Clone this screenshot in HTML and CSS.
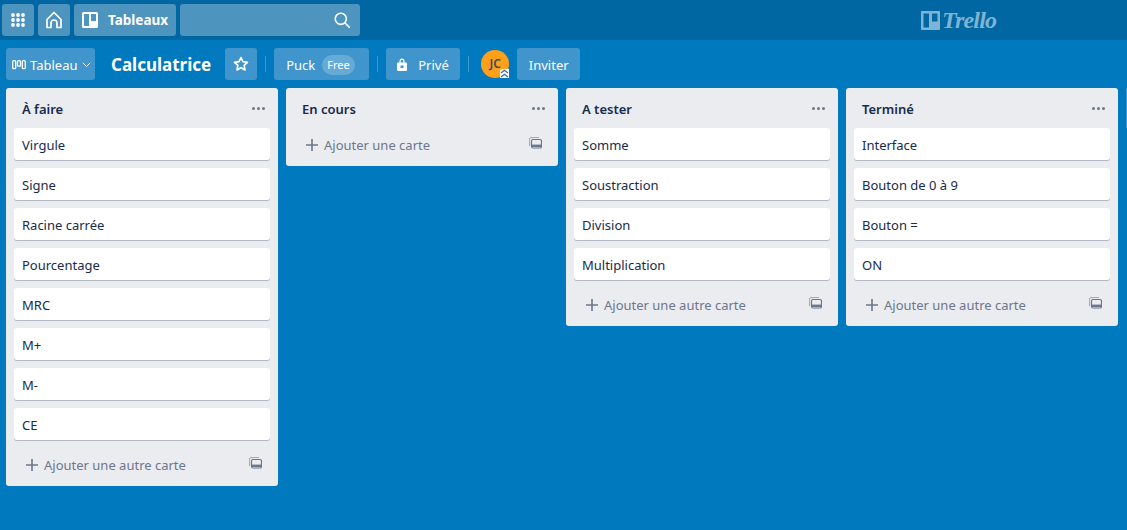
FILE: index.html
```html
<!DOCTYPE html>
<html lang="fr">
<head>
    <meta charset="UTF-8">
    <meta name="viewport" content="width=device-width, initial-scale=1.0">
    <title>Calculatrice | Trello</title>
    <link rel="stylesheet" href="styles.css">
</head>
<body>
    <header class="topbar">
        <div class="btn top-btn square">
            <svg width="16" height="16" viewBox="0 0 16 16" fill="#fff"><circle cx="3" cy="3" r="1.9"/><circle cx="8" cy="3" r="1.9"/><circle cx="13" cy="3" r="1.9"/><circle cx="3" cy="8" r="1.9"/><circle cx="8" cy="8" r="1.9"/><circle cx="13" cy="8" r="1.9"/><circle cx="3" cy="13" r="1.9"/><circle cx="8" cy="13" r="1.9"/><circle cx="13" cy="13" r="1.9"/></svg>
        </div>
        <div class="btn top-btn square">
            <svg width="16" height="18" viewBox="0 0 16 18" fill="none" stroke="#fff" stroke-width="1.700" stroke-linejoin="round"><path d="M1 8.500 8 1.500l7 7v8h-4v-4.500a3 3 0 0 0-6 0v4.500H1z"/></svg>
        </div>
        <div class="btn top-btn boards-btn">
            <svg width="16" height="16" viewBox="0 0 16 16"><path fill="#fff" fill-rule="evenodd" d="M1.500 0h13A1.500 1.500 0 0 1 16 1.500v13a1.500 1.500 0 0 1-1.500 1.500h-13A1.500 1.500 0 0 1 0 14.500v-13A1.500 1.500 0 0 1 1.500 0zM2 2v12h5V2zm7 0v7h5V2z"/></svg>
            <span>Tableaux</span>
        </div>
        <div class="btn top-btn search">
            <svg width="16" height="16" viewBox="0 0 16 16" fill="none" stroke="#fff" stroke-width="1.600"><circle cx="6.800" cy="6.800" r="5.600"/><path d="m11 11 4.500 4.500" stroke-linecap="round"/></svg>
        </div>
        <div class="logo">
            <svg width="19" height="19" viewBox="0 0 19 19"><path fill="#7fb3d3" fill-rule="evenodd" d="M1 0h17a1 1 0 0 1 1 1v17a1 1 0 0 1-1 1H1a1 1 0 0 1-1-1V1a1 1 0 0 1 1-1zm1.500 2.500v14h5.500v-14zm8.500 0v8h5.500v-8z"/></svg>
            <span class="logo-text">Trello</span>
        </div>
    </header>

    <div class="board-header">
        <div class="btn head-btn view-btn">
            <svg width="14" height="10" viewBox="0 0 14 10" fill="none" stroke="#fff" stroke-width="1.300"><rect x="0.700" y="0.700" width="3" height="8" rx="1"/><rect x="5.500" y="0.700" width="3" height="5.500" rx="1"/><rect x="10.300" y="0.700" width="3" height="8" rx="1"/></svg>
            <span>Tableau</span>
            <svg width="9" height="6" viewBox="0 0 9 6" fill="none" stroke="#fff"><path d="m.8.800 3.700 3.700L8.200.8"/></svg>
        </div>
        <h1 class="board-title">Calculatrice</h1>
        <div class="btn head-btn star-btn">
            <svg width="16" height="16" viewBox="0 0 16 16" fill="none" stroke="#fff" stroke-width="1.700" stroke-linejoin="round"><path d="m8 1.600 1.950 4.100 4.500.6-3.300 3.100.85 4.500L8 11.700l-4 2.200.85-4.500-3.300-3.100 4.500-.6z"/></svg>
        </div>
        <span class="divider"></span>
        <div class="btn head-btn team-btn">
            <span>Puck</span>
            <span class="pill">Free</span>
        </div>
        <span class="divider"></span>
        <div class="btn head-btn private-btn">
            <svg width="10" height="13" viewBox="0 0 10 13"><path fill="#fff" fill-rule="evenodd" d="M2.500 4.500V3a2.500 2.500 0 0 1 5 0v1.500H9a1 1 0 0 1 1 1V12a1 1 0 0 1-1 1H1a1 1 0 0 1-1-1V5.500a1 1 0 0 1 1-1zm1.200 0h2.600V3a1.300 1.300 0 0 0-2.600 0zM3.500 7.500v2.500h3V7.500z"/></svg>
            <span>Privé</span>
        </div>
        <span class="divider"></span>
        <div class="avatar">
            <span>JC</span>
            <span class="avatar-badge">
                <svg width="9" height="9" viewBox="0 0 9 9" fill="none" stroke="#3f5fae" stroke-width="1.200"><path d="M1 4 4.500 1.200 8 4M1 8l3.500-2.800L8 8"/></svg>
            </span>
        </div>
        <div class="btn head-btn invite-btn">Inviter</div>
    </div>

    <main class="board">
        <section class="list">
            <div class="list-head"><h2>À faire</h2><span class="dots"><i></i><i></i><i></i></span></div>
            <div class="card">Virgule</div>
            <div class="card">Signe</div>
            <div class="card">Racine carrée</div>
            <div class="card">Pourcentage</div>
            <div class="card">MRC</div>
            <div class="card">M+</div>
            <div class="card">M-</div>
            <div class="card">CE</div>
            <div class="list-foot">
                <svg class="plus" width="12" height="12" viewBox="0 0 12 12"><path fill="#6b778c" d="M5.200 0h1.600v5.200H12v1.600H6.800V12H5.200V6.800H0V5.200h5.200z"/></svg>
                <span>Ajouter une autre carte</span>
                <svg class="tpl" width="13" height="12" viewBox="0 0 13 12" fill="none" stroke="#6b778c"><path d="M.6 9V1.600a1 1 0 0 1 1-1h8.500" opacity="0.600"/><rect x="2.500" y="2.500" width="10" height="8.500" rx="1.500" stroke-width="1.200"/><path d="M3 8.800h9" stroke-width="2.400"/></svg>
            </div>
        </section>

        <section class="list">
            <div class="list-head"><h2>En cours</h2><span class="dots"><i></i><i></i><i></i></span></div>
            <div class="list-foot">
                <svg class="plus" width="12" height="12" viewBox="0 0 12 12"><path fill="#6b778c" d="M5.200 0h1.600v5.200H12v1.600H6.800V12H5.200V6.800H0V5.200h5.200z"/></svg>
                <span>Ajouter une carte</span>
                <svg class="tpl" width="13" height="12" viewBox="0 0 13 12" fill="none" stroke="#6b778c"><path d="M.6 9V1.600a1 1 0 0 1 1-1h8.500" opacity="0.600"/><rect x="2.500" y="2.500" width="10" height="8.500" rx="1.500" stroke-width="1.200"/><path d="M3 8.800h9" stroke-width="2.400"/></svg>
            </div>
        </section>

        <section class="list">
            <div class="list-head"><h2>A tester</h2><span class="dots"><i></i><i></i><i></i></span></div>
            <div class="card">Somme</div>
            <div class="card">Soustraction</div>
            <div class="card">Division</div>
            <div class="card">Multiplication</div>
            <div class="list-foot">
                <svg class="plus" width="12" height="12" viewBox="0 0 12 12"><path fill="#6b778c" d="M5.200 0h1.600v5.200H12v1.600H6.800V12H5.200V6.800H0V5.200h5.200z"/></svg>
                <span>Ajouter une autre carte</span>
                <svg class="tpl" width="13" height="12" viewBox="0 0 13 12" fill="none" stroke="#6b778c"><path d="M.6 9V1.600a1 1 0 0 1 1-1h8.500" opacity="0.600"/><rect x="2.500" y="2.500" width="10" height="8.500" rx="1.500" stroke-width="1.200"/><path d="M3 8.800h9" stroke-width="2.400"/></svg>
            </div>
        </section>

        <section class="list">
            <div class="list-head"><h2>Terminé</h2><span class="dots"><i></i><i></i><i></i></span></div>
            <div class="card">Interface</div>
            <div class="card">Bouton de 0 à 9</div>
            <div class="card">Bouton =</div>
            <div class="card">ON</div>
            <div class="list-foot">
                <svg class="plus" width="12" height="12" viewBox="0 0 12 12"><path fill="#6b778c" d="M5.200 0h1.600v5.200H12v1.600H6.800V12H5.200V6.800H0V5.200h5.200z"/></svg>
                <span>Ajouter une autre carte</span>
                <svg class="tpl" width="13" height="12" viewBox="0 0 13 12" fill="none" stroke="#6b778c"><path d="M.6 9V1.600a1 1 0 0 1 1-1h8.500" opacity="0.600"/><rect x="2.500" y="2.500" width="10" height="8.500" rx="1.500" stroke-width="1.200"/><path d="M3 8.800h9" stroke-width="2.400"/></svg>
            </div>
        </section>

        <div class="add-list"></div>
    </main>
</body>
</html>
```

FILE: styles.css
```css
html, body {
    height: 100%;
}
body {
    margin: 0;
    overflow: hidden;
    background-color: #0079bf;
    color: #172b4d;
    font-family: "Noto Sans", "Open Sans", sans-serif;
    font-size: 13px;
    line-height: 20px;
}
.btn {
    display: flex;
    align-items: center;
    border-radius: 3px;
    color: #fff;
}

/* top bar */
.topbar {
    display: flex;
    gap: 4px;
    height: 40px;
    padding: 4px 2px;
    box-sizing: border-box;
    background-color: #0067a3;
}
.top-btn {
    height: 32px;
    background-color: #4d95bf;
}
.square {
    flex: none;
    width: 32px;
    justify-content: center;
}
.boards-btn {
    width: 102px;
    padding-left: 8px;
    box-sizing: border-box;
    gap: 10px;
    font-size: 13.500px;
    font-weight: 700;
}
.search {
    width: 180px;
    justify-content: flex-end;
    padding-right: 10px;
    box-sizing: border-box;
}
.logo {
    display: flex;
    align-items: center;
    gap: 2px;
    margin-left: 557px;
}
.logo-text {
    color: #7fb3d3;
    font-family: "Liberation Serif", serif;
    font-style: italic;
    font-weight: 700;
    font-size: 24px;
    letter-spacing: -0.8px;
}

/* board header */
.board-header {
    display: flex;
    align-items: center;
    height: 32px;
    padding: 8px 6px;
}
.head-btn {
    height: 32px;
    box-sizing: border-box;
    padding-top: 1px;
    background-color: #4095cc;
}
.view-btn {
    width: 89px;
    padding-left: 6px;
    gap: 4px;
}
.board-title {
    margin: 0 14px 0 16px;
    color: #fff;
    font-size: 17px;
    font-weight: 700;
    line-height: 32px;
    padding-top: 1px;
}
.star-btn {
    width: 32px;
    padding-top: 0;
    justify-content: center;
}
.divider {
    width: 1px;
    height: 16px;
    margin: 0 8px;
    background-color: #3f99d0;
}
.team-btn {
    width: 95px;
    padding-left: 12px;
    gap: 7px;
}
.pill {
    padding: 0 5px;
    border-radius: 10px;
    background-color: #66aad6;
    font-size: 11px;
}
.private-btn {
    width: 74px;
    padding-left: 11px;
    gap: 11px;
}
.avatar {
    position: relative;
    display: flex;
    align-items: center;
    justify-content: center;
    width: 28px;
    height: 28px;
    margin: 0 8px 0 4px;
    border-radius: 50%;
    background-color: #ff9f1a;
    color: #3d4a5c;
    font-size: 12px;
    font-weight: 600;
}
.avatar-badge {
    position: absolute;
    right: 0;
    bottom: 0;
    display: flex;
    width: 9px;
    height: 9px;
    background-color: #fff;
    border-radius: 2px 0 0 0;
}
.invite-btn {
    width: 63px;
    justify-content: center;
}

/* lists */
.board {
    display: flex;
    align-items: flex-start;
    gap: 8px;
    padding-left: 6px;
}
.list {
    flex: none;
    width: 272px;
    padding: 0 8px;
    box-sizing: border-box;
    background-color: #ebecf0;
    border-radius: 3px;
}
.list-head {
    display: flex;
    align-items: center;
    justify-content: space-between;
    height: 40px;
    padding: 0 5px 0 8px;
}
.list-head h2 {
    margin: 0;
    padding-top: 2px;
    font-size: 13px;
    font-weight: 600;
    line-height: 20px;
}
.dots {
    display: flex;
    gap: 2px;
}
.dots i {
    width: 3px;
    height: 3px;
    border-radius: 50%;
    background-color: #6b778c;
}
.card {
    height: 32px;
    margin-bottom: 8px;
    padding: 7px 8px 0;
    box-sizing: border-box;
    background-color: #fff;
    border-radius: 3px;
    box-shadow: 0 1px 0 rgba(9, 30, 66, 0.25);
}
.list-foot {
    display: flex;
    align-items: center;
    height: 38px;
    margin-top: -2px;
    margin-bottom: 2px;
    padding-left: 12px;
    color: #6b778c;
}
.plus {
    margin-right: 6px;
}
.tpl {
    margin-left: auto;
    margin-right: 8px;
    margin-top: -4px;
}
.add-list {
    flex: 1;
    min-width: 0;
    height: 40px;
    background-color: rgba(255, 255, 255, 0.24);
    border-radius: 3px;
}
```
